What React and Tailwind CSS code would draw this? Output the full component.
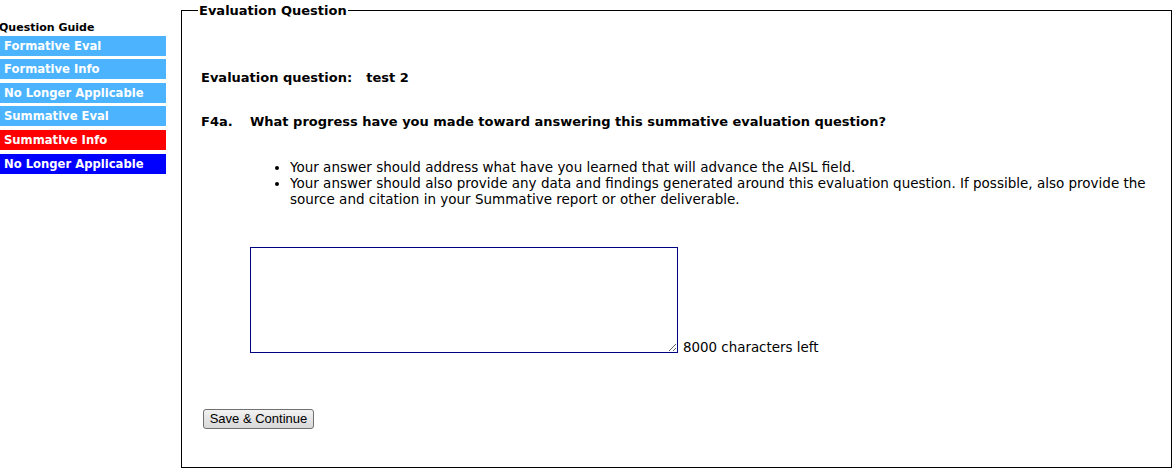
export default function App() {
  const guide = [
    { label: "Formative Eval", color: "bg-[#4cb4ff]", gap: "mt-0" },
    { label: "Formative Info", color: "bg-[#4cb4ff]", gap: "mt-[3px]" },
    { label: "No Longer Applicable", color: "bg-[#4cb4ff]", gap: "mt-[4px]" },
    { label: "Summative Eval", color: "bg-[#4cb4ff]", gap: "mt-[3px]" },
    { label: "Summative Info", color: "bg-[#ff0000]", gap: "mt-[4px]" },
    { label: "No Longer Applicable", color: "bg-[#0000ff]", gap: "mt-[4px]" },
  ]

  return (
    <div className="w-[1174px] h-[471px] bg-white flex font-['DejaVu_Sans',sans-serif] text-black overflow-hidden">
      {/* Sidebar */}
      <div className="w-[166px] shrink-0 pt-[21px]">
        <div className="text-[11px] font-bold leading-[14px] ml-[-1px] mb-[1px]">Question Guide</div>
        <div className="flex flex-col">
          {guide.map((g, i) => (
            <div key={i} className={`${g.color} ${g.gap} h-[20px] pl-[4px] text-white text-[11.6px] font-bold leading-[20px]`}>
              {g.label}
            </div>
          ))}
        </div>
      </div>

      {/* Main fieldset */}
      <fieldset className="ml-[15px] mt-[3px] w-[991px] h-[465px] border border-black px-[19px] pb-0">
        <legend className="px-[1px] ml-[-3px] text-[13px] font-bold leading-[15px]">Evaluation Question</legend>

        <div className="mt-[52px] text-[13px] font-bold leading-[16px]">
          Evaluation question:<span className="ml-[14px]">test 2</span>
        </div>

        <div className="mt-[28px] flex text-[13px] font-bold leading-[16px]">
          <span className="w-[49px]">F4a.</span>
          <span>What progress have you made toward answering this summative evaluation question?</span>
        </div>

        <ul className="mt-[29px] ml-[89px] list-disc text-[13.5px] leading-[16px]">
          <li>Your answer should address what have you learned that will advance the AISL field.</li>
          <li>
            Your answer should also provide any data and findings generated around this evaluation question. If possible, also
            provide the source and citation in your Summative report or other deliverable.
          </li>
        </ul>

        <div className="mt-[40px] ml-[49px] flex items-end gap-[5px]">
          <textarea className="w-[428px] h-[106px] border border-[#000080] block resize-y" />
          <span className="text-[13.4px] leading-[14px] mb-[-2px]">8000 characters left</span>
        </div>

        <button className="mt-[56px] ml-[2px] h-[20px] w-[111px] border border-[#707070] rounded-[3px] bg-gradient-to-b from-[#f2f2f2] to-[#d8d8d8] text-[13px] font-['Liberation_Sans',sans-serif] leading-[16px]">
          Save &amp; Continue
        </button>
      </fieldset>
    </div>
  )
}
